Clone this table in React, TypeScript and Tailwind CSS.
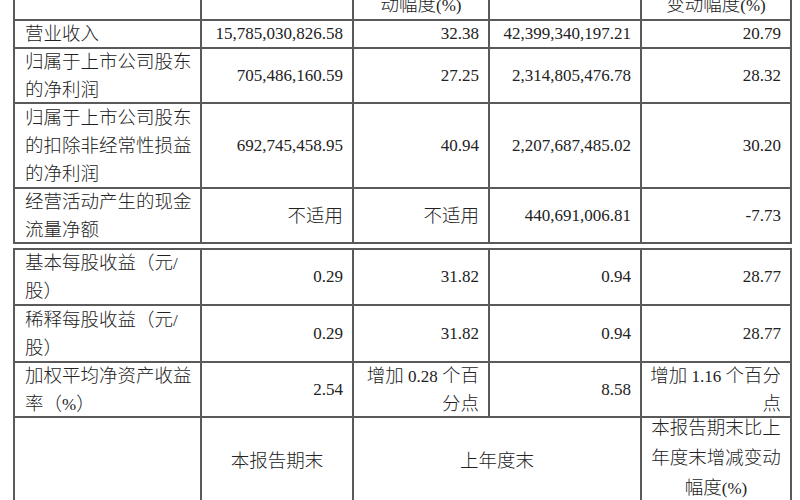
import React from "react";

const CJK = /([\u2E80-\u9FFF\uFF00-\uFFEF\u3000-\u303F]+)/;

function T({ s }: { s: string }) {
  const parts = s.split(CJK).filter((p) => p.length > 0);
  return (
    <>
      {parts.map((p, i) =>
        CJK.test(p) ? (
          <span key={i} className="text-[18.5px]">
            {p}
          </span>
        ) : (
          <span key={i}>{p}</span>
        )
      )}
    </>
  );
}

type Cell = string | string[];
type Align = "left" | "right" | "center";

function CellBox({
  c,
  w,
  align,
  tall,
  extra = "",
}: {
  c: Cell;
  w: string;
  align: Align;
  tall?: boolean;
  extra?: string;
}) {
  const arr = Array.isArray(c) ? c : c === "" ? [] : [c];
  const alignCls =
    align === "left"
      ? "text-left pl-[10px] pr-[8px]"
      : align === "right"
      ? "text-right pl-[8px] pr-[9px]"
      : "text-center px-[8px]";
  const lineCls = tall
    ? "whitespace-nowrap h-[30px] leading-[30px] shrink-0"
    : "whitespace-nowrap h-[28px] leading-[28px] shrink-0";
  return (
    <div
      className={`${w} shrink-0 h-full flex flex-col justify-center border-r-2 border-[#5a5a5a] ${alignCls} ${extra}`}
    >
      {arr.map((l, i) => (
        <div key={i} className={lineCls}>
          <T s={l} />
        </div>
      ))}
    </div>
  );
}

const W = ["w-[187px]", "w-[152px]", "w-[136px]", "w-[152px]", "w-[150px]"];

type Row = { h: string; cells: Cell[] };

function DataRow({ r }: { r: Row }) {
  return (
    <div className={`flex ${r.h} border-b-2 border-[#5a5a5a] overflow-visible`}>
      {r.cells.map((c, j) => (
        <CellBox key={j} c={c} w={W[j]} align={j === 0 ? "left" : "right"} />
      ))}
    </div>
  );
}

const table1: Row[] = [
  {
    h: "h-[28px]",
    cells: [["营业收入"], "15,785,030,826.58", "32.38", "42,399,340,197.21", "20.79"],
  },
  {
    h: "h-[55px]",
    cells: [["归属于上市公司股东", "的净利润"], "705,486,160.59", "27.25", "2,314,805,476.78", "28.32"],
  },
  {
    h: "h-[85px]",
    cells: [
      ["归属于上市公司股东", "的扣除非经常性损益", "的净利润"],
      "692,745,458.95",
      "40.94",
      "2,207,687,485.02",
      "30.20",
    ],
  },
  {
    h: "h-[55px]",
    cells: [["经营活动产生的现金", "流量净额"], "不适用", "不适用", "440,691,006.81", "-7.73"],
  },
];

const table2: Row[] = [
  {
    h: "h-[56px]",
    cells: [["基本每股收益（元/", "股）"], "0.29", "31.82", "0.94", "28.77"],
  },
  {
    h: "h-[57px]",
    cells: [["稀释每股收益（元/", "股）"], "0.29", "31.82", "0.94", "28.77"],
  },
  {
    h: "h-[55px]",
    cells: [
      ["加权平均净资产收益", "率（%）"],
      "2.54",
      ["增加 0.28 个百", "分点"],
      "8.58",
      ["增加 1.16 个百分", "点"],
    ],
  },
];

export default function App() {
  return (
    <div
      className="w-[800px] h-[500px] overflow-hidden bg-white text-[#222] text-[17px]"
      style={{ fontFamily: '"Liberation Serif", "Noto Sans CJK SC", serif' }}
    >
      <div className="mt-[-67px] ml-[13px] w-[779px] font-light">
        {/* Table 1 */}
        <div className="border-l-2 border-t-2 border-[#5a5a5a]">
          <div className="flex h-[86px] border-b-2 border-[#5a5a5a]">
            <CellBox c="项目" w={W[0]} align="center" />
            <CellBox c="本报告期" w={W[1]} align="center" />
            <CellBox c={["本报告期比上", "年同期增减变", "动幅度(%)"]} w={W[2]} align="center" />
            <CellBox c="年初至报告期末" w={W[3]} align="center" />
            <CellBox c={["年初至报告期末", "比上年同期增减", "变动幅度(%)"]} w={W[4]} align="center" />
          </div>
          {table1.map((r, i) => (
            <DataRow key={i} r={r} />
          ))}
        </div>
        {/* Table 2 */}
        <div className="mt-[4px] border-l-2 border-t-2 border-[#5a5a5a]">
          {table2.map((r, i) => (
            <DataRow key={i} r={r} />
          ))}
          <div className="flex h-[88px] border-b-2 border-[#5a5a5a]">
            <CellBox c="" w={W[0]} align="center" />
            <CellBox c="本报告期末" w={W[1]} align="center" />
            <CellBox c="上年度末" w="w-[288px]" align="center" />
            <CellBox
              c={["本报告期末比上", "年度末增减变动", "幅度(%)"]}
              w={W[4]}
              align="center"
              tall
              extra="pb-[6px]"
            />
          </div>
        </div>
      </div>
    </div>
  );
}
